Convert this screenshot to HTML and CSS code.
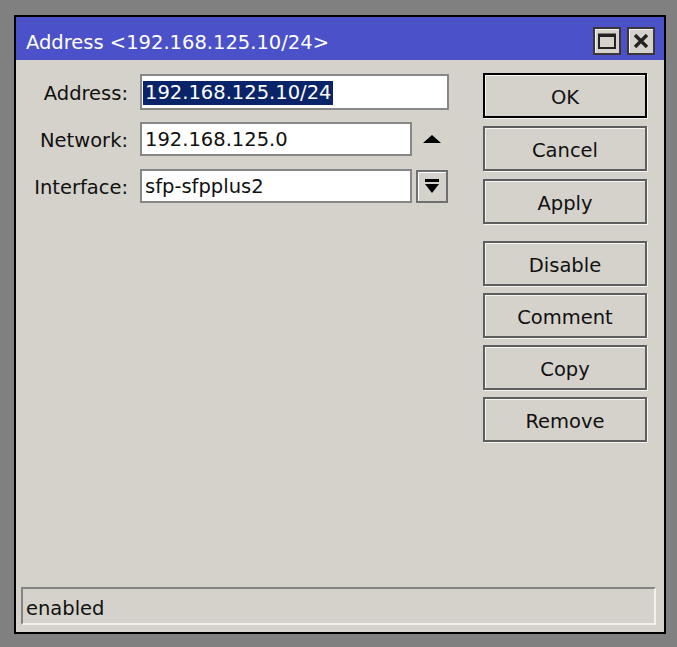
FILE: index.html
```html
<!DOCTYPE html>
<html lang="en">
<head>
  <meta charset="UTF-8" />
  <title>Address &lt;192.168.125.10/24&gt;</title>
  <link rel="stylesheet" href="styles.css">
</head>
<body>

  <div class="window">

    <!-- Title bar -->
    <div class="titlebar">
      <span class="title">Address &lt;192.168.125.10/24&gt;</span>
      <div class="title-btns">
        <button class="tbtn" title="Maximize">
          <svg width="18" height="16" viewBox="0 0 18 16"><rect x="1" y="1.5" width="16" height="13.5" fill="none" stroke="#222" stroke-width="2"/><rect x="1" y="1" width="16" height="3" fill="#222"/></svg>
        </button>
        <button class="tbtn" title="Close">
          <svg width="16" height="14" viewBox="0 0 16 14"><path d="M2 1 L14 13 M14 1 L2 13" stroke="#222" stroke-width="3.4"/></svg>
        </button>
      </div>
    </div>

    <!-- Body -->
    <div class="content">
      <div class="form">
        <div class="row">
          <label>Address:</label>
          <div class="field wide"><span class="sel">192.168.125.10/24</span></div>
        </div>
        <div class="row">
          <label>Network:</label>
          <div class="field">192.168.125.0</div>
          <div class="ctl">
            <svg width="18" height="8" viewBox="0 0 18 8"><polygon points="9,0 18,8 0,8" fill="#000"/></svg>
          </div>
        </div>
        <div class="row">
          <label>Interface:</label>
          <div class="field">sfp-sfpplus2</div>
          <div class="ctl drop">
            <svg width="16" height="15" viewBox="0 0 16 15"><rect x="1" y="0" width="14" height="3" fill="#000"/><polygon points="1,5 15,5 8,14" fill="#000"/></svg>
          </div>
        </div>
      </div>

      <div class="actions">
        <div class="group">
          <button class="btn default">OK</button>
          <button class="btn">Cancel</button>
          <button class="btn">Apply</button>
        </div>
        <div class="group second">
          <button class="btn">Disable</button>
          <button class="btn">Comment</button>
          <button class="btn">Copy</button>
          <button class="btn">Remove</button>
        </div>
      </div>
    </div>

    <!-- Status -->
    <div class="status">enabled</div>
  </div>

</body>
</html>
```

FILE: styles.css
```css
* { margin: 0; padding: 0; box-sizing: border-box; }
body { background: #808080; font-family: 'DejaVu Sans', Verdana, sans-serif; font-size: 19.5px; color: #111; padding: 15px 0 0 14px; }

.window { width: 652px; height: 619px; border: 2px solid #000; background: #d5d2cb; display: flex; flex-direction: column; }

.titlebar { height: 43px; background: #4b51c8; color: #fff; display: flex; align-items: center; justify-content: space-between; padding: 0 9px 0 10px; }
.title { font-size: 19.5px; padding-top: 8px; }
.title-btns { display: flex; gap: 6px; margin-top: 4px; }
.tbtn { width: 28px; height: 28px; background: #d5d2cb; border: 2px solid #3a3836; box-shadow: inset 1px 1px 0 #f4f3f0; display: flex; align-items: center; justify-content: center; }

.content { flex: 1; display: flex; justify-content: space-between; padding: 13px 17px 0 0; }

.form { display: flex; flex-direction: column; gap: 10px; padding-top: 1px; }
.row { display: flex; align-items: center; height: 36px; }
.row + .row { margin-top: 1px; }
.row label { width: 112px; text-align: right; margin-right: 12px; padding-top: 2px; }
.field { width: 272px; height: 34px; background: #fff; border: 2px solid #878787; padding: 1px 3px 0; display: flex; align-items: center; }
.field.wide { width: 309px; height: 36px; padding: 1px 1px 0; }
.sel { background: #0a246a; color: #fff; padding: 1px 2px; line-height: 22px; }
.ctl { width: 32px; height: 33px; margin-left: 4px; display: flex; align-items: center; justify-content: center; }
.drop { border: 2px solid #6f6f6f; box-shadow: inset 1px 1px 0 #fff; }

.actions { display: flex; flex-direction: column; }
.group { display: flex; flex-direction: column; gap: 8px; }
.group.second { gap: 7px; margin-top: 17px; }
.btn { width: 164px; height: 45px; background: #d5d2cb; font-family: inherit; font-size: 19.5px; color: #111; padding-top: 3px; border: 2px solid #5e5e5e; box-shadow: inset 1px 1px 0 #f6f5f2, 1px 1px 0 #f6f5f2; }
.btn.default { border-color: #000; }

.status { margin: 0 8px 7px 5px; height: 38px; border: 2px solid #f2f1ee; border-top-color: #838383; border-left-color: #838383; padding: 4px 3px 0; display: flex; align-items: center; }
```
